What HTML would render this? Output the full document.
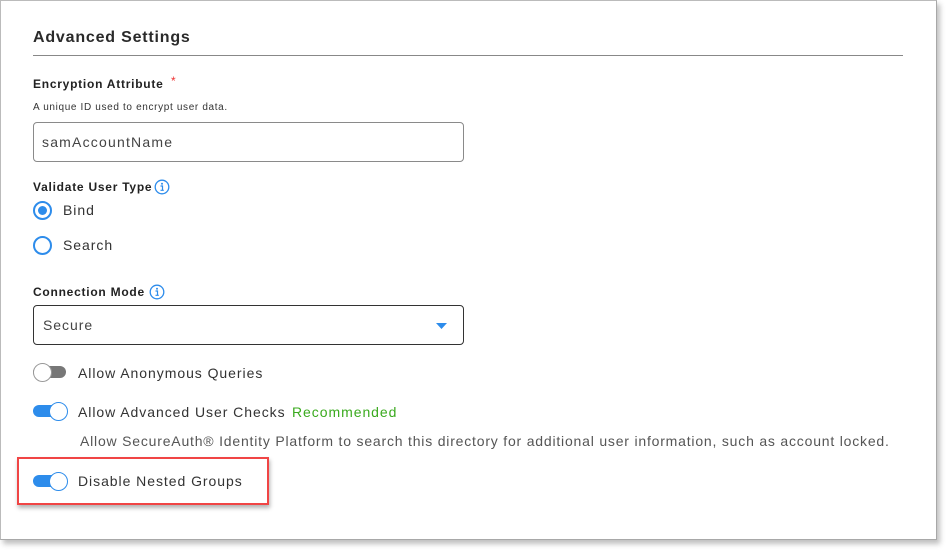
<!DOCTYPE html>
<html><head><style>
*{margin:0;padding:0;box-sizing:border-box}
body{width:951px;height:555px;background:#fff;font-family:"Liberation Sans",sans-serif;position:relative;overflow:hidden;color:#333}
.panel{position:absolute;left:0;top:0;width:937px;height:540px;border:1px solid #a8a8a8;border-top-color:#bbb;border-left-color:#bbb;box-shadow:3px 4px 5px rgba(0,0,0,.25);background:#fff}
.a{position:absolute;white-space:nowrap}
.b{font-weight:bold;font-size:12px;color:#222;letter-spacing:0.75px}
.box{position:absolute;left:33px;width:431px;height:40px;border:1px solid #8a8a8a;border-radius:4px}
.radio{position:absolute;width:19px;height:19px;border:2px solid #2d8ceb;border-radius:50%}
.tr{position:absolute;left:33px;width:33px;height:12px;border-radius:6px}
.kn{position:absolute;width:19px;height:19px;border-radius:50%;background:#fff;border:1px solid #2d8ceb}
.lbl{font-size:14px;color:#333;letter-spacing:0.95px}
</style></head><body>
<div class="panel"></div>
<div class="a" style="left:33px;top:29px;font-size:16px;font-weight:bold;color:#2a2a2a;letter-spacing:0.8px">Advanced Settings</div>
<div class="a" style="left:33px;top:55px;width:870px;height:1px;background:#888"></div>
<div class="a b" style="left:33px;top:77px">Encryption Attribute</div>
<div class="a" style="left:171px;top:74px;color:#e33;font-size:12px">*</div>
<div class="a" style="left:33px;top:102px;font-size:10px;color:#333;letter-spacing:0.65px">A unique ID used to encrypt user data.</div>
<div class="box" style="top:122px"></div>
<div class="a lbl" style="left:42px;top:134px;color:#444;letter-spacing:1.2px">samAccountName</div>
<div class="a b" style="left:33px;top:180px">Validate User Type</div>
<svg class="a" style="left:154px;top:179px" width="16" height="16" viewBox="0 0 16 16"><circle cx="8" cy="8" r="6.8" fill="none" stroke="#2d8ceb" stroke-width="1.3"/><circle cx="8" cy="4.8" r="1" fill="#2d8ceb"/><path d="M6.5 7h2v4.3M6.5 11.3h3.3" fill="none" stroke="#2d8ceb" stroke-width="1.2"/></svg>
<div class="radio" style="left:33px;top:201px"></div>
<div class="a" style="left:38px;top:206px;width:9px;height:9px;border-radius:50%;background:#2d8ceb"></div>
<div class="a lbl" style="left:63px;top:202px">Bind</div>
<div class="radio" style="left:33px;top:236px"></div>
<div class="a lbl" style="left:63px;top:237px">Search</div>
<div class="a b" style="left:33px;top:285px">Connection Mode</div>
<svg class="a" style="left:149px;top:284px" width="16" height="16" viewBox="0 0 16 16"><circle cx="8" cy="8" r="6.8" fill="none" stroke="#2d8ceb" stroke-width="1.3"/><circle cx="8" cy="4.8" r="1" fill="#2d8ceb"/><path d="M6.5 7h2v4.3M6.5 11.3h3.3" fill="none" stroke="#2d8ceb" stroke-width="1.2"/></svg>
<div class="box" style="top:305px;border-color:#333"></div>
<div class="a lbl" style="left:43px;top:317px;color:#444">Secure</div>
<svg class="a" style="left:436px;top:323px" width="11" height="7"><path d="M0 0h11L5.5 6z" fill="#2d8ceb"/></svg>
<div class="tr" style="top:366px;background:#777"></div>
<div class="kn" style="left:33px;top:363px;border-color:#999"></div>
<div class="a lbl" style="left:78px;top:365px">Allow Anonymous Queries</div>
<div class="tr" style="top:405px;background:#2d8ceb"></div>
<div class="kn" style="left:49px;top:402px"></div>
<div class="a lbl" style="left:78px;top:404px">Allow Advanced User Checks</div>
<div class="a lbl" style="left:292px;top:404px;color:#3aaa1e">Recommended</div>
<div class="a" style="left:80px;top:433px;font-size:14px;color:#555;letter-spacing:0.8px">Allow SecureAuth® Identity Platform to search this directory for additional user information, such as account locked.</div>
<div class="tr" style="top:475px;background:#2d8ceb"></div>
<div class="kn" style="left:49px;top:472px"></div>
<div class="a lbl" style="left:78px;top:473px">Disable Nested Groups</div>
<div class="a" style="left:17px;top:457px;width:252px;height:48px;border:2px solid #f04545;box-shadow:1px 3px 4px rgba(0,0,0,.3)"></div>
</body></html>
